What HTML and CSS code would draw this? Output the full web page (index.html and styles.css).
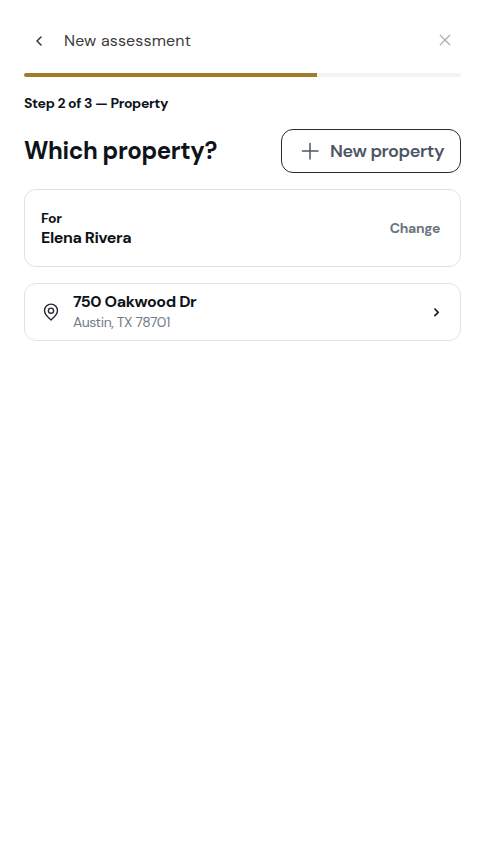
FILE: index.html
```html
<!DOCTYPE html>
<html lang="en">
<head>
<meta charset="utf-8">
<title>New assessment</title>
<link rel="stylesheet" href="styles.css">
</head>
<body>
<main class="page">
  <header class="header">
    <button class="back" aria-label="Back"><svg width="7" height="10" viewBox="0 0 7 10"><path d="M5 1 1 5l4 4"/></svg></button>
    <span class="header-title">New assessment</span>
    <button class="close" aria-label="Close"><svg width="12" height="12" viewBox="0 0 12 12"><path d="m1.300 1.300 9.400 9.400M10.700 1.300l-9.400 9.400"/></svg></button>
  </header>
  <div class="progress"><div class="progress-fill"></div></div>
  <p class="step">Step 2 of 3 — Property</p>
  <div class="heading">
    <h1>Which property?</h1>
    <button class="new-property"><svg width="18" height="18" viewBox="0 0 18 18"><path d="M9 1.500v15.500M1.500 9h15.500"/></svg><span>New property</span></button>
  </div>
  <section class="card client">
    <div>
      <div class="label">For</div>
      <div class="name">Elena Rivera</div>
    </div>
    <button class="change">Change</button>
  </section>
  <section class="card property">
    <svg class="pin" width="16" height="18" viewBox="0 0 16 18"><path d="M8 16.900C6.600 15.500 1.500 12.200 1.500 7.600a6.500 6.500 0 0 1 13 0C14.500 12.200 9.400 15.500 8 16.900Z"/><circle cx="8" cy="7.700" r="2.600"/></svg>
    <div class="address">
      <div class="street">750 Oakwood Dr</div>
      <div class="city">Austin, TX 78701</div>
    </div>
    <svg class="chevron" width="6" height="9" viewBox="0 0 6 9"><path d="M.900 1 4.200 4.300.900 7.600"/></svg>
  </section>
</main>
</body>
</html>
```
FILE: styles.css
```css
* { box-sizing: border-box; }
body {
  margin: 0;
  background: #fff;
  color: #0e131a;
  font-family: "DM Sans", Inter, sans-serif;
}
button { border: 0; padding: 0; background: none; font: inherit; display: flex; align-items: center; justify-content: center; }
svg { display: block; flex: none; fill: none; stroke: currentColor; stroke-width: 1.5; stroke-linecap: round; stroke-linejoin: round; }
h1, p { margin: 0; }
h1, p, span, button { white-space: nowrap; }
.page { width: 461px; padding: 25px 0 0 24px; }
.header { display: flex; align-items: center; height: 32px; }
.back { width: 30px; height: 32px; color: #333; }
.header-title { flex: 1; margin-left: 10px; font-size: 16px; line-height: 24px; letter-spacing: 0.15px; color: #3c3c3b; }
.close { width: 32px; height: 32px; color: #b3aea6; padding-bottom: 2px; }
.close svg { stroke-width: 1.3; }
.progress { height: 4px; margin-top: 16px; border-radius: 2px; overflow: hidden; background: #f0f3f4; }
.progress-fill { width: 67%; height: 100%; background: #a17c2c; }
.step { margin-top: 16px; font-size: 14px; line-height: 20px; font-weight: 700; letter-spacing: -0.36px; }
.heading { display: flex; align-items: center; justify-content: space-between; margin-top: 16px; height: 44px; }
h1 { font-size: 24px; line-height: 32px; font-weight: 700; letter-spacing: -0.38px; }
.new-property { width: 180px; height: 44px; border: 1px solid #252c38; border-radius: 12px; padding: 0 16px 0 19px; justify-content: flex-start; gap: 11px; color: #4b5563; font-size: 18px; font-weight: 600; letter-spacing: -0.42px; }
.card { display: flex; align-items: center; margin-top: 16px; padding: 0 16px; border: 1px solid #dde3e3; border-radius: 12px; }
.client { height: 78px; justify-content: space-between; }
.label { font-size: 14px; line-height: 20px; font-weight: 700; letter-spacing: -0.3px; }
.name, .street { font-size: 16px; line-height: 20px; font-weight: 700; letter-spacing: -0.4px; }
.change { margin-right: 4px; font-size: 14px; font-weight: 700; letter-spacing: -0.36px; color: #6b7580; }
.property { height: 58px; }
.pin { margin-left: 2px; color: #252a31; stroke-width: 1.400; }
.address { flex: 1; margin-left: 14px; }
.city { font-size: 14px; line-height: 20px; letter-spacing: -0.42px; color: #747b88; }
.chevron { margin-right: 4px; color: #1c2027; stroke-width: 1.700; }
```
